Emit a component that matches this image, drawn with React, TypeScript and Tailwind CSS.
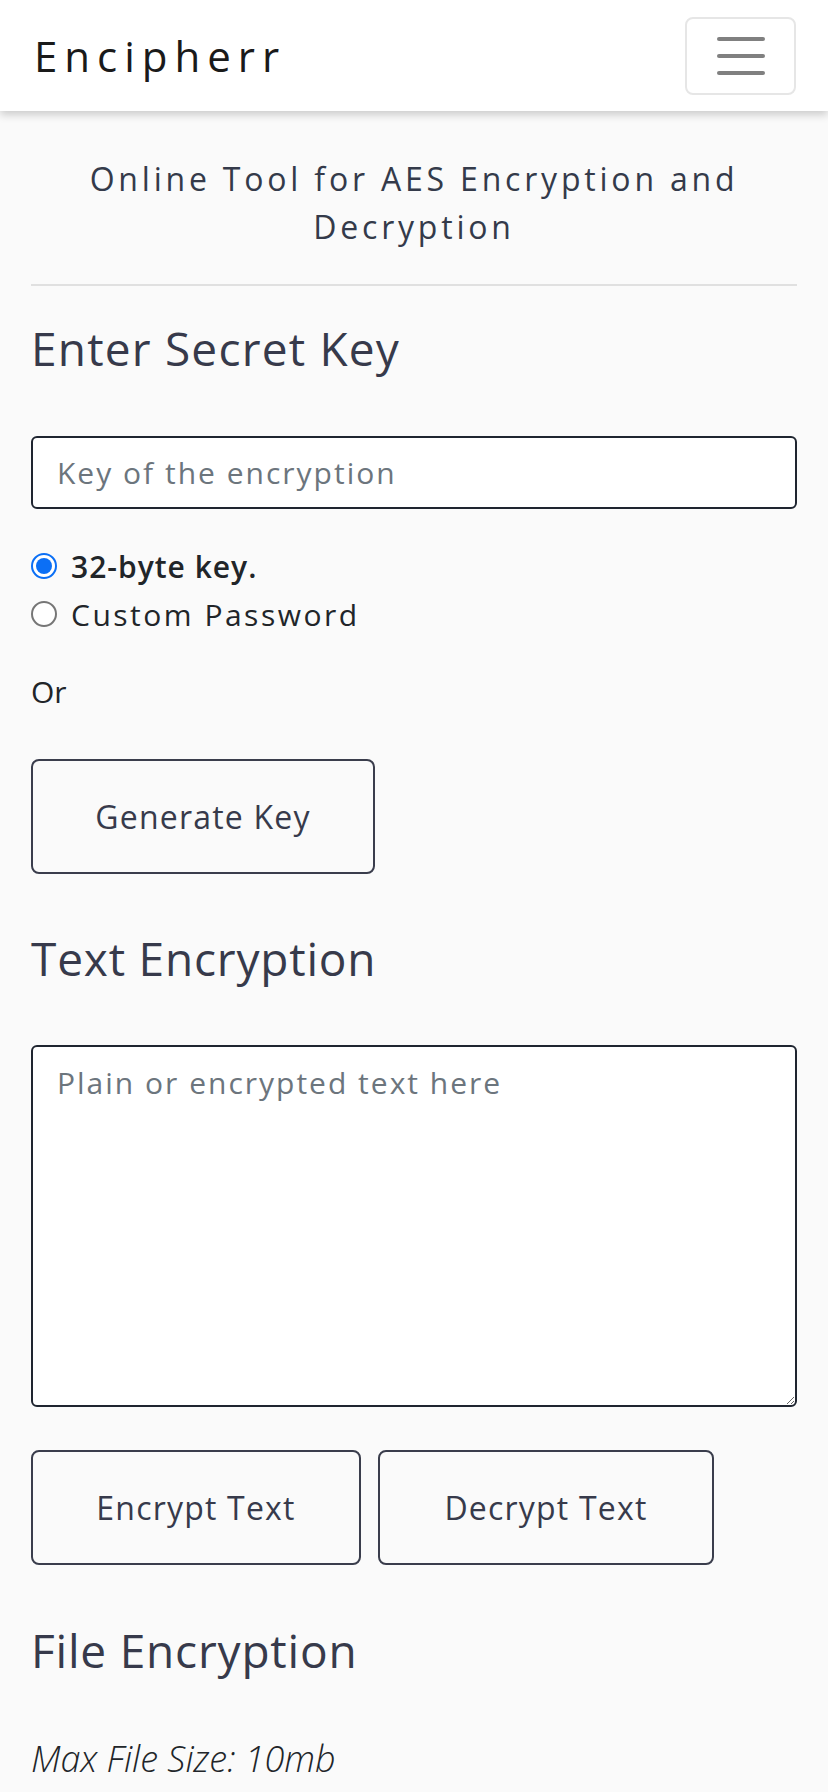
import React, { useState } from 'react';

const font = { fontFamily: '"Open Sans", "Liberation Sans", sans-serif' };

const Radio = ({ checked, label, bold, onClick }: { checked: boolean; label: string; bold?: boolean; onClick: () => void }) => (
    <label onClick={onClick} className="flex items-center gap-[14px] h-[48px] cursor-pointer">
        {checked ? (
            <span className="w-[26px] h-[26px] rounded-full border-[2px] border-[#0b6ff5] bg-white flex items-center justify-center">
                <span className="w-[16px] h-[16px] rounded-full bg-[#0b6ff5]"></span>
            </span>
        ) : (
            <span className="w-[26px] h-[26px] rounded-full border-[2px] border-[#767676] bg-white"></span>
        )}
        <span className={`text-[30px] text-[#212529] ${bold ? 'font-semibold tracking-[1px]' : 'font-normal tracking-[2.5px]'}`}>{label}</span>
    </label>
);

const OutlineButton = ({ children, className }: { children: React.ReactNode; className: string }) => (
    <button className={`h-[115px] border-[2px] border-[#3a3d4c] rounded-[8px] bg-transparent text-[32px] font-medium tracking-[1.2px] text-[#373a4b] ${className}`}>
        {children}
    </button>
);

export default function App() {
    const [keyType, setKeyType] = useState<'32' | 'custom'>('32');

    return (
        <div className="min-h-[1792px] bg-[#fafafa]" style={font}>
            {/* navbar */}
            <nav className="h-[111px] bg-white flex items-center justify-between pl-[34px] pr-[32px] shadow-[0_4px_8px_rgba(0,0,0,0.18)] relative z-10">
                <span className="text-[42px] text-[#1a1a1a] tracking-[7px]">Encipherr</span>
                <button className="w-[111px] h-[78px] border-[2px] border-[#e6e6e6] rounded-[8px] flex flex-col items-center justify-center gap-[13px]">
                    <span className="block w-[48px] h-[4px] rounded-full bg-[#808080]"></span>
                    <span className="block w-[48px] h-[4px] rounded-full bg-[#808080]"></span>
                    <span className="block w-[48px] h-[4px] rounded-full bg-[#808080]"></span>
                </button>
            </nav>

            <main className="px-[31px]">
                <p className="mt-[44px] text-center text-[32px] leading-[48px] font-medium text-[#343a4a] tracking-[3.8px] px-[10px]">
                    Online Tool for AES Encryption and Decryption
                </p>
                <hr className="mt-[33px] border-0 h-[2px] bg-[#e0e0e0]" />

                {/* secret key */}
                <h2 className="mt-[34px] text-[46px] leading-[56px] font-medium tracking-[1.2px] text-[#373a4b]">Enter Secret Key</h2>
                <input
                    className="mt-[60px] w-full h-[73px] border-[2px] border-[#1f2530] rounded-[6px] bg-white px-[24px] text-[30px] tracking-[2px] outline-none placeholder:text-[#6c757d]"
                    placeholder="Key of the encryption"
                />
                <div className="mt-[33px] flex flex-col">
                    <Radio checked={keyType === '32'} label="32-byte key." bold onClick={() => setKeyType('32')} />
                    <Radio checked={keyType === 'custom'} label="Custom Password" onClick={() => setKeyType('custom')} />
                </div>
                <p className="mt-[30px] text-[30px] leading-[48px] font-medium text-[#212529]">Or</p>
                <OutlineButton className="mt-[43px] w-[344px] block">Generate Key</OutlineButton>

                {/* text encryption */}
                <h2 className="mt-[56px] text-[46px] leading-[56px] font-medium tracking-[0.8px] text-[#373a4b]">Text Encryption</h2>
                <textarea
                    className="mt-[59px] block w-full h-[362px] border-[2px] border-[#1f2530] rounded-[6px] bg-white px-[24px] py-[12px] text-[30px] leading-[48px] tracking-[2px] outline-none placeholder:text-[#6c757d]"
                    placeholder="Plain or encrypted text here"
                ></textarea>
                <div className="mt-[43px] flex gap-[17px]">
                    <OutlineButton className="w-[330px]">Encrypt Text</OutlineButton>
                    <OutlineButton className="w-[336px]">Decrypt Text</OutlineButton>
                </div>

                {/* file encryption */}
                <h2 className="mt-[57px] text-[46px] leading-[56px] font-medium tracking-[0.8px] text-[#373a4b]">File Encryption</h2>
                <p className="mt-[54px] text-[36px] italic font-light text-[#212529]">Max File Size: 10mb</p>
            </main>
        </div>
    );
}
